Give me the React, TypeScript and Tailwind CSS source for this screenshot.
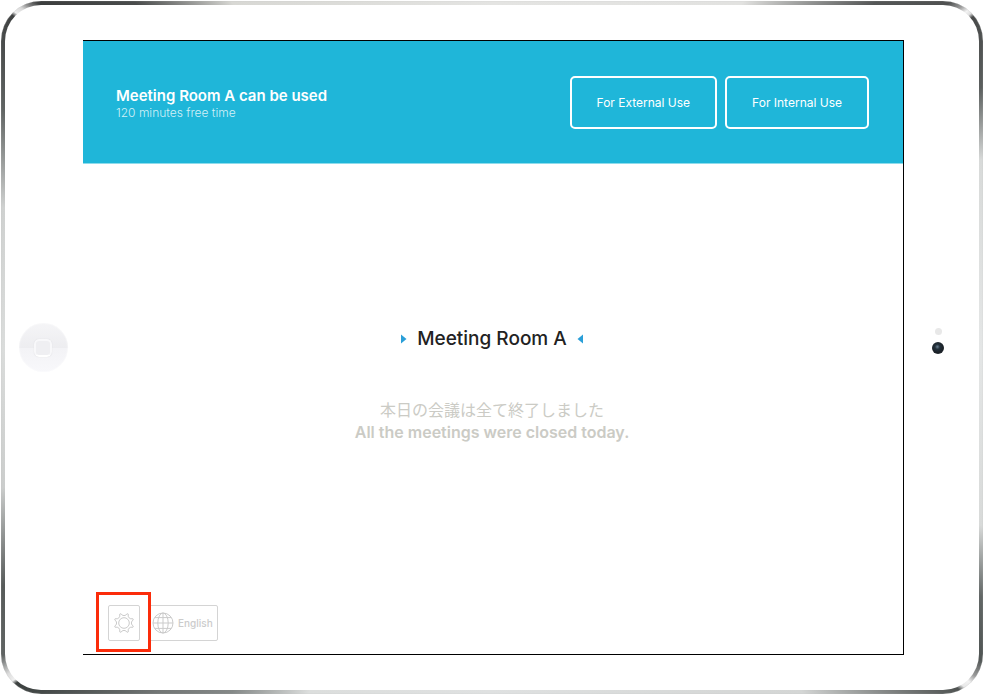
import React, { useState } from 'react';

interface UseType {
  id: string;
  label: string;
}

const useTypes: UseType[] = [
  { id: 'external', label: 'For External Use' },
  { id: 'internal', label: 'For Internal Use' },
];

function GearIcon() {
  return (
    <svg width="22" height="22" viewBox="0 0 22 22" fill="none" stroke="currentColor" strokeWidth="1" strokeLinejoin="round" aria-hidden="true">
      {/* eight blunt teeth with scooped gaps between them */}
      <path d="M8 1.7A3.3 3.3 0 0 0 14 1.7L15.4 2.3A3.3 3.3 0 0 0 19.7 6.6L20.3 8A3.3 3.3 0 0 0 20.3 14L19.7 15.4A3.3 3.3 0 0 0 15.4 19.7L14 20.3A3.3 3.3 0 0 0 8 20.3L6.6 19.7A3.3 3.3 0 0 0 2.3 15.4L1.7 14A3.3 3.3 0 0 0 1.7 8L2.3 6.6A3.3 3.3 0 0 0 6.6 2.3Z" />
      <circle cx="11" cy="11" r="5.3" />
    </svg>
  );
}

function GlobeIcon() {
  return (
    <svg width="22" height="22" viewBox="0 0 22 22" fill="none" stroke="currentColor" strokeWidth="1" aria-hidden="true">
      <circle cx="11" cy="11" r="10" />
      <ellipse cx="11" cy="11" rx="5.2" ry="10" />
      <path d="M11 1v20M1 11h20M2.6 5.6h16.8M2.6 16.4h16.8" />
    </svg>
  );
}

function HomeButton() {
  return (
    <button
      type="button"
      aria-label="Home"
      className="w-[49px] h-[49px] rounded-full flex items-center justify-center bg-[linear-gradient(#f5f5f7_0%,#ededf0_50%,#f3f3f6_52%,#f8f8fb_100%)] shadow-[inset_0_0_2px_#ffffff]"
    >
      <span className="w-[18px] h-[18px] rounded-[5px] border-2 border-[#f8f8fa] border-b-white bg-[#efeff2] shadow-[0_0_1px_#d4d4d8]" />
    </button>
  );
}

export default function App() {
  const [selected, setSelected] = useState('');

  return (
    <div className="h-screen pt-px pb-px pl-px pr-[2px] bg-white font-['Inter','Noto_Sans_CJK_JP',sans-serif]">
      {/* Metal rim */}
      <div className="h-full rounded-[40px] p-[4px] shadow-[inset_0_0_1px_#bbbbbb] bg-[conic-gradient(#e4e4e2_0deg,#e2e2e0_36deg,#555757_48deg,#4f5151_53deg,#999999_54deg,#f4f4f4_54.7deg,#e0e0e0_55.1deg,#484a4a_55.5deg,#5b5f5e_62deg,#d8dad9_69deg,#e4e6e6_90deg,#d8dad9_110deg,#626766_117deg,#505554_122.6deg,#999999_124.2deg,#f2f2f2_125deg,#e8e8e8_125.7deg,#4e5251_126.2deg,#777a79_130deg,#d4d6d5_138deg,#dfe1e1_180deg,#dcdedd_208deg,#858988_217deg,#737776_224deg,#424746_233deg,#3c403f_234.8deg,#f0f0f0_235.2deg,#dddddd_236deg,#606463_237.8deg,#575b5a_244deg,#cbcdcc_254deg,#dadcdb_270deg,#cfd1d0_286deg,#606463_296deg,#3f4141_304.7deg,#f0f0f0_305.1deg,#d8d8d8_305.8deg,#8a8a8a_306.4deg,#3c3e3e_307.2deg,#4a4c4c_314deg,#d8d8d4_323deg,#e4e4e2_360deg)]">
        <div className="h-full rounded-[36px] bg-white flex items-center">
          <div className="w-[78px] shrink-0 flex justify-center pr-[2px]">
            <HomeButton />
          </div>

          {/* Screen */}
          <div className="flex-1 self-stretch flex flex-col mt-[35px] mb-[35px] border-y border-r border-black">
            <header className="h-[123px] shrink-0 bg-[#1fb6d9] border-b border-[#8edcec] flex items-center justify-between pl-[33px] pr-[34px] text-white">
              <div className="pt-[2px]">
                <h1 className="text-[15px] leading-[19px] font-semibold">Meeting Room A can be used</h1>
                <p className="text-[12px] leading-4 font-light text-[#d2f0f7]">120 minutes free time</p>
              </div>
              <div className="flex gap-2">
                {useTypes.map((type) => (
                  <button
                    key={type.id}
                    type="button"
                    aria-pressed={selected === type.id}
                    onClick={() => setSelected(type.id)}
                    className="h-[53px] px-[25px] pt-[2px] rounded-[5px] border-2 border-white text-[12px]"
                  >
                    {type.label}
                  </button>
                ))}
              </div>
            </header>

            <main className="flex-1 flex flex-col items-center justify-center pr-[2px]">
              <div className="flex items-center gap-[10px]">
                <svg width="6" height="10" viewBox="0 0 6 10" fill="#2a9fd8" aria-hidden="true">
                  <path d="M0 0.5l5.5 4.5-5.5 4.5z" />
                </svg>
                <h2 className="text-[19px] leading-6 font-medium text-[#222222]">Meeting Room A</h2>
                <svg width="6" height="10" viewBox="0 0 6 10" fill="#2a9fd8" aria-hidden="true">
                  <path d="M6 0.5L0.5 5l5.5 4.5z" />
                </svg>
              </div>
              <div className="mt-12 text-center text-[#cbcbc5]">
                <p className="text-[16px] leading-[22px]" lang="ja">本日の会議は全て終了しました</p>
                <p className="text-[16px] leading-[22px] font-semibold">All the meetings were closed today.</p>
              </div>
            </main>

            <footer className="flex gap-2 pl-[25px] pb-[13px] text-[#cbcbcb]">
              <div className="relative">
                <button type="button" aria-label="Settings" className="w-8 h-9 rounded-[2px] border border-[#d4d4d4] flex items-center justify-center">
                  <GearIcon />
                </button>
                {/* Highlight around the settings button */}
                <span className="absolute -left-3 -right-[11px] -top-[13px] -bottom-[11px] border-3 border-[#fb2c0a] pointer-events-none z-10" />
              </div>
              <button type="button" className="h-9 pl-[3px] pr-1 rounded-[2px] border border-[#d4d4d4] flex items-center gap-1 text-[10px] font-medium">
                <GlobeIcon />
                English
              </button>
            </footer>
          </div>

          {/* Camera side */}
          <div className="w-[75px] shrink-0 flex flex-col items-center gap-[7px] pb-[14px] pr-[7px]">
            <span className="w-[7px] h-[7px] rounded-full bg-[#e8e8e8]" />
            <span className="w-3 h-3 rounded-full bg-[radial-gradient(circle_at_45%_40%,#6b8091_0%,#22303b_25%,#1a2026_60%,#3a3f44_100%)]" />
          </div>
        </div>
      </div>
    </div>
  );
}
